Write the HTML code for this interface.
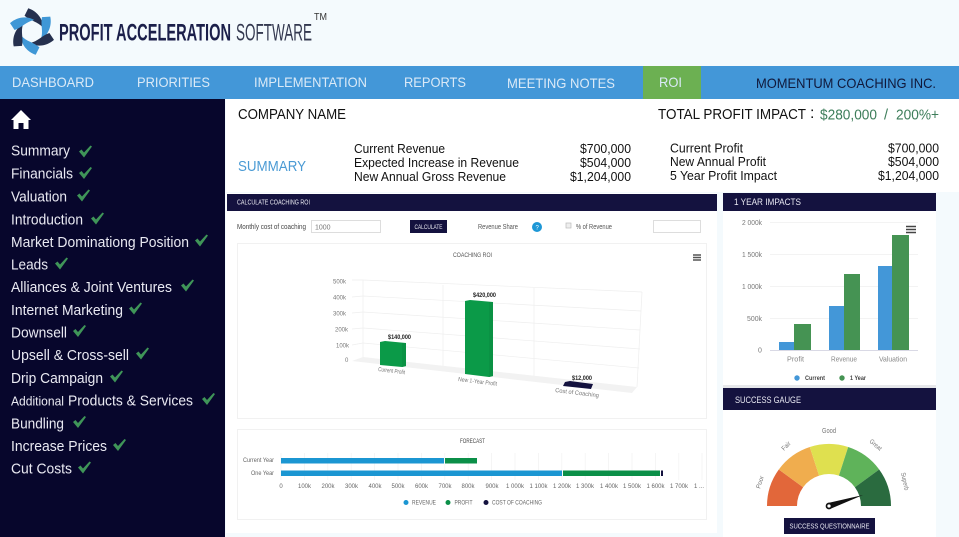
<!DOCTYPE html>
<html><head><meta charset="utf-8"><title>Profit Acceleration Software</title>
<style>
html,body{margin:0;padding:0;background:#f4fafd;width:959px;height:537px;overflow:hidden}
svg{display:block;position:absolute;left:0;top:0;filter:blur(.3px)}
text{font-family:"Liberation Sans",sans-serif}
.n{font-size:14px;fill:#dbeaf7}
.s{font-size:15px;fill:#e9e9f2}
.i{font-size:13px;fill:#111}
.t{font-size:6px;fill:#666}
.v{font-size:6px;fill:#777}
</style></head><body>
<svg width="959" height="537" viewBox="0 0 959 537">
<rect width="959" height="537" fill="#f4fafd"/>
<!-- logo -->
<g transform="translate(32,31.500) scale(.93)">
<path d="M-8,-17 L-4,-25 C5,-22 12,-14 12,-4 C6,-11 -1,-11 -8,-17 Z" fill="#25304e"/>
<path transform="rotate(60)" d="M-8,-17 L-4,-25 C5,-22 12,-14 12,-4 C6,-11 -1,-11 -8,-17 Z" fill="#3f97d6"/>
<path transform="rotate(120)" d="M-8,-17 L-4,-25 C5,-22 12,-14 12,-4 C6,-11 -1,-11 -8,-17 Z" fill="#25304e"/>
<path transform="rotate(180)" d="M-8,-17 L-4,-25 C5,-22 12,-14 12,-4 C6,-11 -1,-11 -8,-17 Z" fill="#3f97d6"/>
<path transform="rotate(240)" d="M-8,-17 L-4,-25 C5,-22 12,-14 12,-4 C6,-11 -1,-11 -8,-17 Z" fill="#25304e"/>
<path transform="rotate(300)" d="M-8,-17 L-4,-25 C5,-22 12,-14 12,-4 C6,-11 -1,-11 -8,-17 Z" fill="#3f97d6"/>
</g>
<text x="59" y="40.500" font-size="24" font-weight="700" fill="#1b1f4a" textLength="172" lengthAdjust="spacingAndGlyphs">PROFIT ACCELERATION</text>
<text x="236" y="40.500" font-size="24" fill="#33384f" textLength="76" lengthAdjust="spacingAndGlyphs">SOFTWARE</text>
<text x="314" y="20" font-size="10" fill="#333" textLength="13" lengthAdjust="spacingAndGlyphs">TM</text>
<!-- nav -->
<rect y="66" width="959" height="33" fill="#4397d8"/>
<rect x="643" y="66" width="58" height="33" fill="#6cb052"/>
<text class="n" x="12" y="87" textLength="82" lengthAdjust="spacingAndGlyphs">DASHBOARD</text>
<text class="n" x="137" y="87" textLength="73" lengthAdjust="spacingAndGlyphs">PRIORITIES</text>
<text class="n" x="254" y="87" textLength="113" lengthAdjust="spacingAndGlyphs">IMPLEMENTATION</text>
<text class="n" x="404" y="87" textLength="62" lengthAdjust="spacingAndGlyphs">REPORTS</text>
<text class="n" x="507" y="88" textLength="108" lengthAdjust="spacingAndGlyphs">MEETING NOTES</text>
<text class="n" x="659" y="87" textLength="23" lengthAdjust="spacingAndGlyphs">ROI</text>
<text x="756" y="88" font-size="14" fill="#10183a" textLength="180" lengthAdjust="spacingAndGlyphs">MOMENTUM COACHING INC.</text>
<!-- sidebar -->
<rect y="99" width="225" height="438" fill="#07062c"/>
<path d="M21,110 L31,120 L28.500,120 L28.500,129 L23.500,129 L23.500,123 L18.500,123 L18.500,129 L13.500,129 L13.500,120 L11,120 Z" fill="#fff"/>
<g fill="#3f9558">
<path transform="translate(79,145.500)" d="M0,6 L2.500,4 L5,7 L11.500,0 L13,1 L5,12 Z"/>
<path transform="translate(79,167)" d="M0,6 L2.500,4 L5,7 L11.500,0 L13,1 L5,12 Z"/>
<path transform="translate(77,189.500)" d="M0,6 L2.500,4 L5,7 L11.500,0 L13,1 L5,12 Z"/>
<path transform="translate(91,212.500)" d="M0,6 L2.500,4 L5,7 L11.500,0 L13,1 L5,12 Z"/>
<path transform="translate(195,234.500)" d="M0,6 L2.500,4 L5,7 L11.500,0 L13,1 L5,12 Z"/>
<path transform="translate(55,257.500)" d="M0,6 L2.500,4 L5,7 L11.500,0 L13,1 L5,12 Z"/>
<path transform="translate(181,279.500)" d="M0,6 L2.500,4 L5,7 L11.500,0 L13,1 L5,12 Z"/>
<path transform="translate(129,302.500)" d="M0,6 L2.500,4 L5,7 L11.500,0 L13,1 L5,12 Z"/>
<path transform="translate(73,325)" d="M0,6 L2.500,4 L5,7 L11.500,0 L13,1 L5,12 Z"/>
<path transform="translate(136,347.500)" d="M0,6 L2.500,4 L5,7 L11.500,0 L13,1 L5,12 Z"/>
<path transform="translate(110,370.500)" d="M0,6 L2.500,4 L5,7 L11.500,0 L13,1 L5,12 Z"/>
<path transform="translate(202,393)" d="M0,6 L2.500,4 L5,7 L11.500,0 L13,1 L5,12 Z"/>
<path transform="translate(73,416)" d="M0,6 L2.500,4 L5,7 L11.500,0 L13,1 L5,12 Z"/>
<path transform="translate(113,439)" d="M0,6 L2.500,4 L5,7 L11.500,0 L13,1 L5,12 Z"/>
<path transform="translate(78,461.500)" d="M0,6 L2.500,4 L5,7 L11.500,0 L13,1 L5,12 Z"/>
</g>
<text class="s" x="11" y="155.500" textLength="59" lengthAdjust="spacingAndGlyphs">Summary</text>
<text class="s" x="11" y="178.500" textLength="62" lengthAdjust="spacingAndGlyphs">Financials</text>
<text class="s" x="11" y="201.500" textLength="56" lengthAdjust="spacingAndGlyphs">Valuation</text>
<text class="s" x="11" y="224.500" textLength="72" lengthAdjust="spacingAndGlyphs">Introduction</text>
<text class="s" x="11" y="247" textLength="178" lengthAdjust="spacingAndGlyphs">Market Dominationg Position</text>
<text class="s" x="11" y="269.500" textLength="37" lengthAdjust="spacingAndGlyphs">Leads</text>
<text class="s" x="11" y="292" textLength="161" lengthAdjust="spacingAndGlyphs">Alliances &amp; Joint Ventures</text>
<text class="s" x="11" y="315" textLength="112" lengthAdjust="spacingAndGlyphs">Internet Marketing</text>
<text class="s" x="11" y="337.500" textLength="56" lengthAdjust="spacingAndGlyphs">Downsell</text>
<text class="s" x="11" y="360" textLength="118" lengthAdjust="spacingAndGlyphs">Upsell &amp; Cross-sell</text>
<text class="s" x="11" y="383" textLength="92" lengthAdjust="spacingAndGlyphs">Drip Campaign</text>
<text x="11" y="405.500" font-size="13" fill="#e9e9f2" textLength="53" lengthAdjust="spacingAndGlyphs">Additional</text>
<text class="s" x="68" y="405.500" textLength="125" lengthAdjust="spacingAndGlyphs">Products &amp; Services</text>
<text class="s" x="11" y="428.500" textLength="53" lengthAdjust="spacingAndGlyphs">Bundling</text>
<text class="s" x="11" y="451" textLength="96" lengthAdjust="spacingAndGlyphs">Increase Prices</text>
<text class="s" x="11" y="473.500" textLength="61" lengthAdjust="spacingAndGlyphs">Cut Costs</text>
<!-- info panel -->
<rect x="226" y="99" width="733" height="93" fill="#fff"/>
<text x="238" y="119" font-size="14.500" fill="#111" textLength="108" lengthAdjust="spacingAndGlyphs">COMPANY NAME</text>
<text x="658" y="119" font-size="14.500" fill="#111" textLength="148" lengthAdjust="spacingAndGlyphs">TOTAL PROFIT IMPACT</text>
<text x="810" y="118" font-size="16" fill="#111">:</text>
<text x="820" y="119.500" font-size="14.500" fill="#3d7d5a" textLength="57" lengthAdjust="spacingAndGlyphs">$280,000</text>
<text x="884" y="119.500" font-size="14.500" fill="#3d7d5a">/</text>
<text x="896" y="119.500" font-size="14.500" fill="#3d7d5a" textLength="43" lengthAdjust="spacingAndGlyphs">200%+</text>
<text x="238" y="171" font-size="15" fill="#4a9ad4" textLength="68" lengthAdjust="spacingAndGlyphs">SUMMARY</text>
<text class="i" x="354" y="153" textLength="91" lengthAdjust="spacingAndGlyphs">Current Revenue</text>
<text class="i" x="354" y="167" textLength="165" lengthAdjust="spacingAndGlyphs">Expected Increase in Revenue</text>
<text class="i" x="354" y="181" textLength="152" lengthAdjust="spacingAndGlyphs">New Annual Gross Revenue</text>
<text class="i" x="580" y="153" textLength="51" lengthAdjust="spacingAndGlyphs">$700,000</text>
<text class="i" x="580" y="167" textLength="51" lengthAdjust="spacingAndGlyphs">$504,000</text>
<text class="i" x="570" y="181" textLength="61" lengthAdjust="spacingAndGlyphs">$1,204,000</text>
<text class="i" x="670" y="152.500" textLength="73" lengthAdjust="spacingAndGlyphs">Current Profit</text>
<text class="i" x="670" y="166" textLength="96" lengthAdjust="spacingAndGlyphs">New Annual Profit</text>
<text class="i" x="670" y="180" textLength="107" lengthAdjust="spacingAndGlyphs">5 Year Profit Impact</text>
<text class="i" x="888" y="152.500" textLength="51" lengthAdjust="spacingAndGlyphs">$700,000</text>
<text class="i" x="888" y="166" textLength="51" lengthAdjust="spacingAndGlyphs">$504,000</text>
<text class="i" x="878" y="180" textLength="61" lengthAdjust="spacingAndGlyphs">$1,204,000</text>
<!-- left main panel -->
<rect x="226" y="193" width="491" height="340" fill="#fff"/>
<rect x="227" y="194" width="490" height="17" fill="#14123f"/>
<text x="237" y="204.500" font-size="7" fill="#e8e8f0" textLength="73" lengthAdjust="spacingAndGlyphs">CALCULATE COACHING ROI</text>
<text x="237" y="229" font-size="7" fill="#444" textLength="69" lengthAdjust="spacingAndGlyphs">Monthly cost of coaching</text>
<rect x="311.500" y="220.500" width="69" height="12" fill="#fff" stroke="#ddd"/>
<text x="315" y="229.500" font-size="7" fill="#777">1000</text>
<rect x="410" y="220" width="37" height="13" fill="#14123f"/>
<text x="414.500" y="229" font-size="6.500" fill="#e8e8f0" textLength="28" lengthAdjust="spacingAndGlyphs">CALCULATE</text>
<text x="478" y="229" font-size="7" fill="#555" textLength="40" lengthAdjust="spacingAndGlyphs">Revenue Share</text>
<circle cx="537" cy="227" r="5" fill="#1d97d6"/><text x="535.500" y="229.500" font-size="6" fill="#fff">?</text>
<rect x="566" y="223" width="5" height="5" fill="#eee" stroke="#bbb" stroke-width=".7"/>
<text x="576" y="229" font-size="7" fill="#555" textLength="36" lengthAdjust="spacingAndGlyphs">% of Revenue</text>
<rect x="653.500" y="220.500" width="47" height="12" fill="#fff" stroke="#ddd"/>
<!-- ROI chart -->
<rect x="237.500" y="243.500" width="469" height="175" fill="#fff" stroke="#f1f1f1"/>
<text x="453" y="257" font-size="6.500" fill="#555" textLength="39" lengthAdjust="spacingAndGlyphs">COACHING ROI</text>
<path d="M693,255h8M693,257.500h8M693,260h8" stroke="#555" stroke-width="1.400"/>
<g stroke="#eeeeee" stroke-width=".7" fill="none">
<path d="M352,280 L363,280 L642,292 M352,297 L363,296 L641,311 M352,313 L363,312 L640,330 M352,329 L363,328 L640,349 M352,345 L363,343 L639,368"/>
<path d="M363,280 V357 M443,285 V366 M534,288 V376 M642,292 L637,387"/>
</g>
<polygon points="352,361 363,357 637,387 632,393" fill="#f2f2f2"/>
<text class="v" x="333" y="283.500">500k</text><text class="v" x="333" y="299.500">400k</text><text class="v" x="333" y="315.500">300k</text><text class="v" x="335" y="331.500">200k</text><text class="v" x="336" y="347.500">100k</text><text class="v" x="345" y="362">0</text>
<polygon points="380,342 385,341 406,343 406,366 402,367 380,365" fill="#0b9a48"/>
<polygon points="402,343 406,343 406,366 402,367" fill="#0a9244"/>
<polygon points="465,301 470,300 493,302 493,376 489,377 465,374" fill="#0b9a48"/>
<polygon points="489,302 493,302 493,376 489,377" fill="#0a9244"/>
<polygon points="565,382 570,381 593,384 591,389 563,386" fill="#14123f"/>
<text x="388" y="339" font-size="6.500" font-weight="700" fill="#222" textLength="23" lengthAdjust="spacingAndGlyphs">$140,000</text>
<text x="473" y="297" font-size="6.500" font-weight="700" fill="#222" textLength="23" lengthAdjust="spacingAndGlyphs">$420,000</text>
<text x="572" y="380" font-size="6.500" font-weight="700" fill="#222" textLength="20" lengthAdjust="spacingAndGlyphs">$12,000</text>
<text class="v" transform="translate(378,371) rotate(7)" textLength="27" lengthAdjust="spacingAndGlyphs">Current Profit</text>
<text class="v" transform="translate(458,381) rotate(7)" textLength="39" lengthAdjust="spacingAndGlyphs">New 1-Year Profit</text>
<text class="v" transform="translate(555,392) rotate(7)" font-size="6.500" textLength="44" lengthAdjust="spacingAndGlyphs">Cost of Coaching</text>
<!-- forecast -->
<rect x="237.500" y="429.500" width="469" height="90" fill="#fff" stroke="#f1f1f1"/>
<text x="460" y="443" font-size="6.500" fill="#444" textLength="25" lengthAdjust="spacingAndGlyphs">FORECAST</text>
<g stroke="#f1f1f1" stroke-width=".7">
<path d="M281,453V480M304.400,453V480M327.800,453V480M351.200,453V480M374.600,453V480M398,453V480M421.400,453V480M444.800,453V480M468.200,453V480M491.600,453V480M515,453V480M538.400,453V480M561.800,453V480M585.200,453V480M608.600,453V480M632,453V480M655.400,453V480M678.800,453V480M702,453V480"/>
</g>
<rect x="281" y="458" width="163" height="5.500" fill="#1b96d2"/>
<rect x="445" y="458" width="32" height="5.500" fill="#0b8f48"/>
<rect x="281" y="470.500" width="281" height="5.500" fill="#1b96d2"/>
<rect x="563" y="470.500" width="97" height="5.500" fill="#0b8f48"/>
<rect x="661" y="470.500" width="2" height="5.500" fill="#14123f"/>
<text class="t" x="243" y="462" textLength="31" lengthAdjust="spacingAndGlyphs">Current Year</text>
<text class="t" x="251" y="475" textLength="23" lengthAdjust="spacingAndGlyphs">One Year</text>
<g text-anchor="middle">
<text class="t" x="281" y="488">0</text><text class="t" x="304.500" y="488">100k</text><text class="t" x="328" y="488">200k</text><text class="t" x="351.500" y="488">300k</text><text class="t" x="375" y="488">400k</text><text class="t" x="398" y="488">500k</text><text class="t" x="421.500" y="488">600k</text><text class="t" x="445" y="488">700k</text><text class="t" x="468" y="488">800k</text><text class="t" x="492" y="488">900k</text><text class="t" x="515" y="488">1 000k</text><text class="t" x="538.500" y="488">1 100k</text><text class="t" x="562" y="488">1 200k</text><text class="t" x="585" y="488">1 300k</text><text class="t" x="609" y="488">1 400k</text><text class="t" x="632" y="488">1 500k</text><text class="t" x="655.500" y="488">1 600k</text><text class="t" x="679" y="488">1 700k</text><text class="t" x="699" y="488">1 ...</text>
</g>
<circle cx="406" cy="502.500" r="2.500" fill="#1b96d2"/><text class="t" x="412" y="504.500" textLength="24" lengthAdjust="spacingAndGlyphs">REVENUE</text>
<circle cx="448" cy="502.500" r="2.500" fill="#0b8f48"/><text class="t" x="454.500" y="504.500" textLength="18" lengthAdjust="spacingAndGlyphs">PROFIT</text>
<circle cx="486" cy="502.500" r="2.500" fill="#14123f"/><text class="t" x="492" y="504.500" textLength="50" lengthAdjust="spacingAndGlyphs">COST OF COACHING</text>
<!-- 1 year impacts -->
<rect x="723" y="193" width="213" height="192" fill="#fff"/>
<rect x="723" y="193" width="213" height="18" fill="#14123f"/>
<text x="734" y="205" font-size="9" fill="#e8e8f2" textLength="67" lengthAdjust="spacingAndGlyphs">1 YEAR IMPACTS</text>
<g stroke="#f0f0f0" stroke-width=".8"><path d="M770,222.500H918M770,254.500H918M770,286.500H918M770,318.500H918"/></g>
<path d="M770,350.500H918" stroke="#ccd" stroke-width=".8"/>
<text x="742" y="225" font-size="7" fill="#777" textLength="20" lengthAdjust="spacingAndGlyphs">2 000k</text>
<text x="742" y="257" font-size="7" fill="#777" textLength="20" lengthAdjust="spacingAndGlyphs">1 500k</text>
<text x="742" y="289" font-size="7" fill="#777" textLength="20" lengthAdjust="spacingAndGlyphs">1 000k</text>
<text x="747" y="321" font-size="7" fill="#777" textLength="15" lengthAdjust="spacingAndGlyphs">500k</text>
<text x="758" y="352.500" font-size="7" fill="#777">0</text>
<rect x="779" y="342" width="15" height="8" fill="#4397d8"/><rect x="794" y="324" width="17" height="26" fill="#459353"/>
<rect x="829" y="306" width="15" height="44" fill="#4397d8"/><rect x="844" y="274" width="16" height="76" fill="#459353"/>
<rect x="878" y="266" width="14" height="84" fill="#4397d8"/><rect x="892" y="235" width="17" height="115" fill="#459353"/>
<path d="M906,226.500h10M906,229.500h10M906,232.500h10" stroke="#444" stroke-width="1.500"/>
<text x="787" y="361.500" font-size="7" fill="#888" textLength="17" lengthAdjust="spacingAndGlyphs">Profit</text>
<text x="831" y="361.500" font-size="7" fill="#888" textLength="26" lengthAdjust="spacingAndGlyphs">Revenue</text>
<text x="879" y="361.500" font-size="7" fill="#888" textLength="28" lengthAdjust="spacingAndGlyphs">Valuation</text>
<circle cx="797" cy="378" r="2.700" fill="#4397d8"/><text x="805" y="380" font-size="6" font-weight="700" fill="#444" textLength="20" lengthAdjust="spacingAndGlyphs">Current</text>
<circle cx="842" cy="378" r="2.700" fill="#459353"/><text x="850" y="380" font-size="6" font-weight="700" fill="#444" textLength="16" lengthAdjust="spacingAndGlyphs">1 Year</text>
<rect x="723" y="385" width="213" height="3" fill="#e6e7ea"/>
<!-- gauge -->
<rect x="723" y="388" width="213" height="149" fill="#fff"/>
<rect x="723" y="388" width="213" height="22" fill="#14123f"/>
<text x="735" y="403" font-size="9" fill="#e8e8f2" textLength="66" lengthAdjust="spacingAndGlyphs">SUCCESS GAUGE</text>
<path d="M767,506 A62,62 0 0 1 778.800,469.500 L803.100,487.200 A32,32 0 0 0 797,506 Z" fill="#e2673a"/>
<path d="M778.800,469.500 A62,62 0 0 1 809.800,447 L819.100,475.600 A32,32 0 0 0 803.100,487.200 Z" fill="#f0ad4e"/>
<path d="M809.800,447 A62,62 0 0 1 848.200,447 L838.900,475.600 A32,32 0 0 0 819.100,475.600 Z" fill="#dfe04f"/>
<path d="M848.200,447 A62,62 0 0 1 879.200,469.500 L854.900,487.200 A32,32 0 0 0 838.900,475.600 Z" fill="#5fb35a"/>
<path d="M879.200,469.500 A62,62 0 0 1 891,506 L861,506 A32,32 0 0 0 854.900,487.200 Z" fill="#2a6b3f"/>
<path d="M828,503 L863,495 L830,509 Z" fill="#111"/>
<circle cx="829" cy="506" r="2.500" fill="#fff" stroke="#111" stroke-width="1.700"/>
<text x="822" y="433" font-size="7" fill="#777" textLength="14" lengthAdjust="spacingAndGlyphs">Good</text>
<text transform="translate(784,451) rotate(-45)" font-size="6.500" fill="#777" textLength="10" lengthAdjust="spacingAndGlyphs">Fair</text>
<text transform="translate(869,442) rotate(40)" font-size="6.500" fill="#777" textLength="14" lengthAdjust="spacingAndGlyphs">Great</text>
<text transform="translate(760,489) rotate(-72)" font-size="6.500" fill="#777" textLength="13" lengthAdjust="spacingAndGlyphs">Poor</text>
<text transform="translate(901,473) rotate(78)" font-size="6.500" fill="#777" textLength="18" lengthAdjust="spacingAndGlyphs">Superb</text>
<rect x="784" y="518" width="91" height="16" fill="#14123f"/>
<text x="789.500" y="528.500" font-size="7" fill="#e8e8f2" textLength="80" lengthAdjust="spacingAndGlyphs">SUCCESS QUESTIONNAIRE</text>
</svg>
</body></html>
